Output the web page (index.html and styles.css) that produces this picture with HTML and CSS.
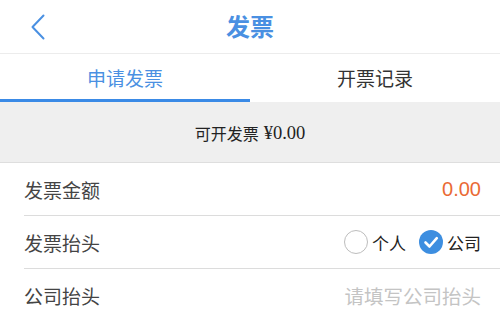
FILE: index.html
```html
<!DOCTYPE html>
<html lang="zh">
<head>
<meta charset="utf-8">
<link rel="stylesheet" href="styles.css">
</head>
<body>
<div class="page">
  <header class="nav">
    <span class="back">
      <svg width="16" height="26" viewBox="0 0 16 26"><path d="M13.5 1.5 L2.5 13 L13.5 24.5" fill="none" stroke="#4a90e2" stroke-width="2" stroke-linecap="round" stroke-linejoin="round"/></svg>
    </span>
    <h1 class="title">发票</h1>
  </header>
  <nav class="tabs">
    <div class="tab active">申请发票</div>
    <div class="tab">开票记录</div>
  </nav>
  <div class="avail">可开发票 <span class="money">¥0.00</span></div>
  <div class="list">
    <div class="row">
      <span class="label">发票金额</span>
      <span class="amount">0.00</span>
    </div>
    <div class="row">
      <span class="label">发票抬头</span>
      <span class="choices">
        <span class="choice"><span class="radio"></span>个人</span>
        <span class="choice">
          <svg class="checked" width="24" height="24" viewBox="0 0 24 24"><circle cx="12" cy="12" r="12" fill="#3d8ee0"/><path d="M6.5 12.5 L10.5 16.5 L17.8 8.2" fill="none" stroke="#fff" stroke-width="2.6" stroke-linecap="round" stroke-linejoin="round"/></svg>公司</span>
      </span>
    </div>
    <div class="row">
      <span class="label">公司抬头</span>
      <span class="placeholder">请填写公司抬头</span>
    </div>
  </div>
</div>
</body>
</html>
```
FILE: styles.css
```css
* { box-sizing: border-box; }
html, body { margin: 0; padding: 0; background: #fff; }
body {
  font-family: "Noto Sans CJK SC", "Liberation Sans", sans-serif;
  color: #333;
  width: 500px;
  height: 316px;
  overflow: hidden;
}
.nav {
  height: 54px;
  border-bottom: 1px solid #ececec;
  display: flex;
  align-items: center;
  justify-content: center;
  position: relative;
}
.back {
  position: absolute;
  left: 30px;
  top: 14px;
  display: flex;
}
.title {
  margin: 0;
  font-size: 24px;
  font-weight: bold;
  color: #4a90e2;
  line-height: 1;
  margin-top: -2px;
}
.tabs {
  display: flex;
  height: 48px;
}
.tab {
  flex: 1;
  display: flex;
  align-items: center;
  justify-content: center;
  font-size: 19px;
  color: #333;
  border-bottom: 3px solid transparent;
  padding-top: 1px;
}
.tab.active {
  color: #4a90e2;
  border-bottom-color: #3a8ae6;
}
.avail {
  height: 61px;
  background: #efefef;
  border-bottom: 1px solid #dedede;
  display: flex;
  align-items: center;
  justify-content: center;
  gap: 5px;
  font-size: 16px;
  color: #222;
  padding-top: 2px;
}
.money {
  font-family: "Liberation Serif", serif;
  font-size: 18.5px;
}
.list { padding-left: 24px; }
.row {
  height: 53px;
  border-bottom: 1px solid #dcdcdc;
  display: flex;
  align-items: center;
  justify-content: space-between;
  padding-right: 19px;
  font-size: 19px;
}
.row:last-child { border-bottom: none; }
.label { color: #444; }
.amount {
  color: #ea6a35;
  font-family: "Liberation Sans", sans-serif;
  font-size: 20px;
}
.choices { display: flex; align-items: center; gap: 13px; }
.choice {
  display: flex;
  align-items: center;
  gap: 4px;
  font-size: 17px;
  color: #222;
}
.radio {
  width: 24px;
  height: 24px;
  border: 1px solid #bdbdbd;
  border-radius: 50%;
  display: inline-block;
}
.checked { display: block; }
.placeholder { color: #c4c4c4; font-size: 19.5px; }
```
